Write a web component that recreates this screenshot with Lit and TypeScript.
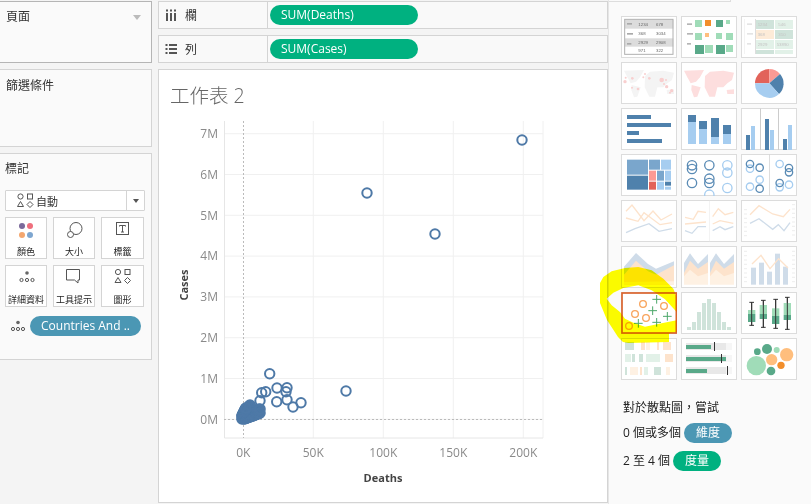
import { LitElement, html, css, svg } from "lit";
import { customElement } from "lit/decorators.js";

type R = [number, number, number, number, string];
const rects = (l: R[]) => l.map(([x, y, w, h, c]) => svg`<rect x=${x} y=${y} width=${w} height=${h} fill=${c}></rect>`);
const rings = (l: number[][], c: string, sw = 4) =>
  l.map(([x, y, r]) => svg`<circle cx=${x} cy=${y} r=${r} fill="none" stroke=${c} stroke-width=${sw}></circle>`);
const dots = (l: number[][], c: string) => l.map(([x, y, r]) => svg`<circle cx=${x} cy=${y} r=${r} fill=${c}></circle>`);
const line = (p: string, c: string, sw = 4) => svg`<polyline points=${p} fill="none" stroke=${c} stroke-width=${sw}></polyline>`;
const area = (p: string, c: string) => svg`<polygon points=${p} fill=${c}></polygon>`;

const BLUE = "#4f81ac", LB = "#a6cdf0", RED = "#e2635a", PINK = "#fc9a94";
const G1 = "#a0dcb8", G2 = "#59a989", OR = "#f28e2b", LO = "#ffbe7d";
const PB = "#cfdce9", PO = "#fde3cc", PO2 = "#fef1e3", PG = "#cfe3da", PG2 = "#e2f1e8";

const world = (dx: number, c: string) =>
  ["222,212 282,210 270,232 258,245 242,250 232,232", "245,255 272,262 262,290 252,292 244,270",
   "285,228 300,215 340,212 372,218 366,240 352,250 340,262 322,262 315,290 298,290 284,262", "350,270 372,268 372,282 352,282"]
    .map((p) => area(p.split(" ").map((q) => { const [a, b] = q.split(","); return `${+a + dx},${b}`; }).join(" "), c));

const tableText = (l: [number, number, string][], c: string) =>
  l.map(([x, y, t]) => svg`<text x=${x} y=${y} class="tiny" fill=${c}>${t}</text>`);

const ticks = (x1: number, x2: number, y0: number, n: number, step: number) =>
  Array.from({ length: n }, (_, i) => svg`<line x1=${x1} x2=${x2} y1=${y0 + i * step} y2=${y0 + i * step} stroke="#e4e4e4" stroke-width="2"></line>`);

const bullet = (y: number, w: number, tick: number) => svg`
  ${rects([[288, y, 120, 21, "#e8e8e8"], [408, y, 18, 21, "#f6f6f6"], [288, y + 6, w, 12, G2], [tick - 1, y - 3, 3, 27, "#333"]])}`;

const box = (x: number, top: number, bot: number, a: number, m: number, b: number) => svg`
  <line x1=${x} x2=${x} y1=${top} y2=${bot} stroke="#333" stroke-width="3"></line>
  <line x1=${x - 7} x2=${x + 7} y1=${top} y2=${top} stroke="#333" stroke-width="3"></line>
  <line x1=${x - 7} x2=${x + 7} y1=${bot} y2=${bot} stroke="#333" stroke-width="3"></line>
  ${rects([[x - 11, a, 22, m - a, G1], [x - 11, m, 22, b - m, G2]])}
  <line x1=${x} x2=${x} y1=${top} y2=${bot} stroke="#333" stroke-width="3"></line>`;

const plus = (x: number, y: number) => svg`<path d="M${x - 13} ${y}h26M${x} ${y - 13}v26" stroke="#4ca86a" stroke-width="3" fill="none"></path>`;

const thumbs: { ox: number; oy: number; c: unknown }[] = [
  { ox: 33, oy: 48, c: svg`
    ${rects([[45, 59, 145, 27, "#dcdcdc"], [45, 115, 145, 25, "#dcdcdc"], [51, 69, 15, 5, "#aaa"], [51, 99, 18, 5, "#aaa"], [51, 129, 13, 5, "#aaa"]])}
    <rect x="44" y="58" width="145" height="105" fill="none" stroke="#b0b0b0" stroke-width="3"></rect>
    ${tableText([[85, 78, "1234"], [138, 78, "678"], [85, 105, "368"], [138, 105, "3034"], [85, 133, "2929"], [138, 133, "2908"], [85, 157, "971"], [138, 157, "322"]], "#666")}` },
  { ox: 213, oy: 48, c: rects([
    [231, 70, 15, 5, "#b5b5b5"], [231, 99, 18, 5, "#b5b5b5"], [231, 129, 12, 5, "#b5b5b5"],
    [255, 60, 21, 21, G1], [285, 60, 18, 18, OR], [318, 60, 21, 21, G2], [348, 60, 12, 12, G1],
    [255, 99, 21, 21, G1], [285, 99, 12, 12, LO], [318, 99, 18, 18, G1], [348, 99, 21, 21, G1],
    [255, 135, 27, 27, G2], [285, 135, 24, 24, G1], [318, 135, 27, 27, G2], [348, 135, 21, 21, G1]]) },
  { ox: 393, oy: 48, c: svg`
    ${rects([[411, 70, 15, 5, "#e4e4e4"], [411, 99, 18, 5, "#e4e4e4"], [411, 129, 12, 5, "#e4e4e4"], [435, 57, 2, 105, "#ccc"], [403, 57, 2, 105, "#eee"],
      [438, 60, 54, 27, PG], [495, 60, 54, 27, PG2], [438, 90, 54, 27, "#fdebd8"], [495, 90, 54, 27, PG], [438, 120, 54, 27, PG2], [495, 120, 54, 27, PG2], [438, 150, 54, 12, PG], [495, 150, 54, 12, PG2]])}
    ${tableText([[443, 78, "1234"], [505, 78, "546"], [443, 108, "368"], [505, 108, "310"], [443, 138, "2929"], [500, 138, "53890"]], "#c4c4c4")}` },

  { ox: 33, oy: 186, c: svg`${world(-180, "#f4f4f4")}${dots([[45, 245, 5], [47, 233, 3], [67, 235, 4], [105, 222, 3], [100, 232, 3], [118, 235, 4], [155, 240, 7], [168, 240, 3], [162, 252, 3], [170, 260, 5], [185, 272, 5], [180, 278, 3], [66, 263, 3], [84, 267, 4]], "#f8cfcf")}` },
  { ox: 213, oy: 186, c: world(0, "#fddede") },
  { ox: 393, oy: 186, c: svg`
    <path d="M478 250L435 250A43 43 0 0 1 478 207Z" fill=${RED}></path>
    <path d="M478 250L478 207A43 43 0 0 1 510 222Z" fill=${PINK}></path>
    <path d="M478 250L510 222A43 43 0 0 1 507 282Z" fill=${BLUE}></path>
    <path d="M478 250L507 282A43 43 0 0 1 435 250Z" fill=${LB}></path>` },

  { ox: 33, oy: 324, c: rects([[51, 345, 72, 12, BLUE], [51, 369, 132, 12, BLUE], [51, 393, 36, 12, BLUE], [51, 417, 105, 12, BLUE]]) },
  { ox: 213, oy: 324, c: rects([[234, 345, 24, 21, BLUE], [234, 366, 24, 66, LB], [267, 363, 24, 24, BLUE], [267, 387, 24, 45, LB], [303, 354, 24, 57, BLUE], [303, 411, 24, 21, LB], [339, 375, 24, 27, BLUE], [339, 402, 24, 30, LB]]) },
  { ox: 393, oy: 324, c: rects([[450, 326, 3, 124, "#ccc"], [504, 326, 3, 124, "#ccc"], [408, 405, 12, 45, BLUE], [423, 378, 12, 72, LB], [465, 357, 12, 93, BLUE], [480, 390, 12, 60, LB], [519, 417, 12, 33, BLUE], [534, 375, 12, 75, LB]]) },

  { ox: 33, oy: 28, c: rects([[51, 45, 63, 45, "#7aa6cc"], [117, 45, 33, 30, "#7aa6cc"], [153, 45, 30, 30, LB], [51, 93, 63, 42, BLUE], [117, 78, 21, 30, PINK], [141, 78, 21, 30, "#7aa6cc"], [165, 78, 18, 30, LB], [117, 111, 21, 24, RED], [141, 111, 21, 24, LB], [165, 111, 18, 12, BLUE], [165, 126, 18, 9, LB]]) },
  { ox: 213, oy: 28, c: svg`${rings([[246, 62, 14], [246, 73, 14], [298, 62, 14], [246, 115, 14], [298, 102, 14], [298, 115, 14]], "#5a8bb5")}${rings([[352, 62, 14], [352, 84, 14], [352, 130, 14], [298, 150, 14]], LB)}` },
  { ox: 393, oy: 28, c: svg`${rects([[478, 30, 2, 122, "#ccc"]])}${rings([[420, 72, 11], [420, 126, 11], [449, 105, 11], [509, 58, 11], [509, 128, 11], [537, 120, 11]], LB)}${rings([[420, 58, 11], [449, 69, 11], [449, 132, 11], [537, 70, 11], [537, 83, 11], [509, 115, 11]], "#5a8bb5")}` },

  { ox: 33, oy: 166, c: svg`${line("48,200 66,181 102,228 129,199 153,226 186,208", PO)}${line("48,220 84,230 102,204 150,240 186,234", PO)}${line("48,264 75,252 117,237 147,260 186,252", PB)}` },
  { ox: 213, oy: 166, c: svg`${rects([[297, 168, 2, 122, "#eee"]])}${line("225,218 250,224 264,200 288,203", PO)}${line("225,238 288,232", PO)}${line("225,258 246,266 264,246 288,246", PB)}${line("308,216 325,192 345,210 370,203", PO)}${line("308,238 330,228 370,236", PO)}${line("308,258 330,246 345,255 370,246", PB)}` },
  { ox: 393, oy: 166, c: svg`${ticks(402, 411, 195, 7, 13)}${ticks(546, 555, 180, 8, 13)}${line("420,210 447,183 488,208 520,216 540,194", PO)}${line("420,236 447,222 488,254 505,240 522,258 540,234", PB)}` },

  { ox: 33, oy: 304, c: svg`${area("42,366 78,325 114,358 138,372 192,350 192,390 42,390", PB)}${area("42,390 78,348 114,380 138,390 192,362 192,420 42,420", PO)}${area("42,420 192,420 192,410 42,412", PO2)}` },
  { ox: 213, oy: 304, c: svg`${area("222,355 240,326 264,358 294,328 294,390 222,390", PB)}${area("222,385 240,348 264,372 294,352 294,400 222,400", PO)}${area("222,395 240,375 264,395 294,385 294,420 222,420", PO2)}${area("300,355 318,326 342,358 372,328 372,390 300,390", PB)}${area("300,385 318,348 342,372 372,352 372,400 300,400", PO)}${area("300,395 318,375 342,395 372,385 372,420 300,420", PO2)}` },
  { ox: 393, oy: 304, c: svg`${ticks(402, 411, 320, 8, 13)}${ticks(546, 555, 320, 8, 13)}${rects([[423, 369, 15, 51, PB], [447, 354, 15, 66, PB], [471, 381, 15, 39, PB], [495, 327, 15, 93, PB], [519, 366, 15, 54, PB]])}${line("426,358 453,332 480,372 506,342 534,370", PO)}` },

  { ox: 93, oy: 96, c: svg`${rings([[159, 132, 10], [135, 162, 10], [168, 174, 10], [222, 138, 10], [117, 198, 10]], "#f8a45c")}${plus(200, 118)}${plus(188, 152)}${plus(145, 190)}${plus(200, 187)}${plus(232, 169)}
    <rect x="96" y="99" width="163" height="120" fill="none" stroke="#d9622b" stroke-width="5"></rect>` },
  { ox: 273, oy: 96, c: rects([[291, 201, 12, 9, PG], [306, 186, 12, 24, PG], [321, 156, 12, 54, PG], [336, 129, 12, 81, PG], [351, 117, 12, 93, PG], [366, 129, 12, 81, PG], [381, 156, 12, 54, PG], [396, 186, 12, 24, PG], [411, 201, 12, 9, PG]]) },
  { ox: 453, oy: 96, c: svg`${box(485, 127, 196, 150, 162, 186)}${box(520, 121, 202, 135, 162, 177)}${box(557, 118, 205, 145, 168, 192)}${box(592, 112, 208, 129, 165, 180)}` },

  { ox: 93, oy: 234, c: rects([[105, 246, 27, 24, PG], [153, 246, 12, 24, PO], [168, 246, 12, 24, PO2], [201, 246, 6, 24, PO], [219, 246, 24, 24, PO], [105, 282, 18, 24, PG2], [126, 282, 9, 24, PG], [147, 282, 12, 24, PG], [168, 282, 42, 24, PG2], [225, 282, 24, 24, PO], [105, 321, 6, 24, PG], [120, 321, 24, 24, PO2], [150, 321, 6, 24, PO], [162, 321, 12, 24, PG2], [192, 321, 21, 24, PG], [228, 321, 12, 24, PO2]]) },
  { ox: 273, oy: 234, c: svg`${bullet(249, 75, 373)}${bullet(285, 120, 394)}${bullet(321, 63, 412)}` },
  { ox: 453, oy: 234, c: svg`${dots([[499, 317, 29], [560, 270, 9]], G1)}${dots([[545, 299, 17], [590, 284, 20]], LO)}${dots([[531, 267, 15], [502, 275, 10], [543, 333, 13]], G2)}${dots([[573, 316, 11]], OR)}` },
];

const points: number[][] = [
  [522, 140], [367, 193], [435, 234], [346, 391], [269.7, 373.7], [277, 388], [287, 387.7], [286, 391.7],
  [260, 400.7], [261.7, 392.7], [265.7, 391.7], [276.7, 401.7], [287, 399.7], [293, 407], [301, 402.7],
];
const cluster: number[][] = [];
for (let i = 0; i < 20; i++) {
  const t = i / 19;
  cluster.push([242 + t * 8, 419 - t * 14], [244 + t * 16, 419 - t * 6], [242 + t * 4, 416 - t * 8], [247 + t * 12, 417 - t * 7], [246 + t * 14, 414 - t * 5]);
}

const ico = {
  dots: html`<svg width="26" height="26" viewBox="0 0 26 26"><circle cx="8" cy="7" r="3" fill="#7b6a9b"></circle><circle cx="16" cy="7" r="3" fill="#ef6f7d"></circle><circle cx="8" cy="16" r="3" fill="#f4a76f"></circle><circle cx="16" cy="16" r="3" fill="#7ea6d0"></circle></svg>`,
  size: html`<svg width="26" height="26" viewBox="0 0 26 26" fill="#fff" stroke="#555"><circle cx="14" cy="9.5" r="6"></circle><circle cx="8.5" cy="15.5" r="3"></circle></svg>`,
  text: html`<svg width="26" height="26" viewBox="0 0 26 26" fill="none" stroke="#555"><rect x="6.5" y="3.5" width="12" height="12"></rect><path d="M9.5 7.5v-1h6v1M12.5 6.5v6.5M11 13h3"></path></svg>`,
  detail: html`<svg width="26" height="26" viewBox="0 0 26 26" fill="none" stroke="#555"><circle cx="13" cy="6" r="1.8" fill="#666" stroke="none"></circle><circle cx="7.5" cy="13" r="1.6"></circle><circle cx="13" cy="13" r="1.6"></circle><circle cx="18.5" cy="13" r="1.6"></circle></svg>`,
  tip: html`<svg width="26" height="26" viewBox="0 0 26 26" fill="none" stroke="#555"><path d="M4.5 2.5h13v10.5h-1.5v3l-3.5-3h-8z"></path></svg>`,
  shape: html`<svg width="26" height="26" viewBox="0 0 26 26" fill="none" stroke="#555"><circle cx="8" cy="5" r="2.6"></circle><rect x="15" y="2.5" width="5" height="5"></rect><path d="M8 10.5l3 5h-6z"></path><path d="M17.5 10.5l3 3-3 3-3-3z"></path></svg>`,
};

@customElement("app-root")
export class AppRoot extends LitElement {
  static styles = css`
    :host { display: block; width: 811px; height: 504px; position: relative; overflow: hidden; background: #f4f4f4;
      font-family: "Open Sans", "Noto Sans CJK TC", sans-serif; color: #333; }
    .app { display: grid; grid-template-columns: 152px 450px 203px; column-gap: 6px; height: 504px; }
    .left { display: flex; flex-direction: column; gap: 6px; padding-top: 1px; }
    .panel { box-sizing: border-box; background: #fafafa; border: 1px solid #d4d4d4; border-left: none; position: relative; padding: 5px 6px; font-size: 12px; }
    .pages { height: 62px; border-color: #b5b5b5; display: flex; justify-content: space-between; align-items: flex-start; padding-top: 5px; }
    .caret { width: 0; height: 0; border: 4px solid transparent; border-top: 5px solid #bbb; border-bottom: none; margin: 8px 4px 0 0; }
    .filters { height: 78px; padding-top: 6px; }
    .marks { height: 207px; padding: 5px 5px; }
    .mk-title { margin-bottom: 13px; }
    .select { box-sizing: border-box; width: 140px; height: 21px; border: 1px solid #d4d4d4; background: #fff; display: flex; align-items: center; margin-bottom: 6px; border-radius: 1px; }
    .select svg { margin-left: 10px; }
    .select span { flex: 1; margin-left: 0; font-size: 11px; }
    .select i { width: 17px; height: 100%; border-left: 1px solid #d4d4d4; display: flex; align-items: center; justify-content: center; }
    .select i::after { content: ""; border: 3.5px solid transparent; border-top: 4px solid #555; border-bottom: none; }
    .mbtns { display: grid; grid-template-columns: 42px 42px 43px; column-gap: 6px; row-gap: 6px; width: 140px; }
    .mbtn { box-sizing: border-box; height: 42px; border: 1px solid #d4d4d4; background: #fff; display: flex; flex-direction: column; align-items: center; font-size: 9px; line-height: 11px; color: #222; padding-top: 1px; white-space: nowrap; }
    .mbtn svg { display: block; margin-bottom: 1px; margin-left: 1px; }
    .field { display: flex; align-items: center; margin-top: 9px; gap: 0; }
    .pill { box-sizing: border-box; color: #fff; border-radius: 10px; height: 20px; line-height: 20px; font-size: 12px; }
    .field .pill { background: #4b97b4; width: 111px; padding-left: 11px; white-space: nowrap; }
    .mid { display: flex; flex-direction: column; gap: 6px; padding-top: 1px; padding-bottom: 1px; box-sizing: border-box; height: 504px; }
    .shelf { box-sizing: border-box; height: 28px; border: 1px solid #d4d4d4; background: #f9f9f9; display: flex; align-items: center; font-size: 12px; }
    .sh-label { box-sizing: border-box; width: 109px; height: 100%; border-right: 1px solid #d4d4d4; display: flex; align-items: center; gap: 8px; padding-left: 6px; }
    .shelf .pill { background: #00b180; width: 148px; margin-left: 2px; padding-left: 11px; }
    .sheet { flex: 1; box-sizing: border-box; border: 1px solid #d4d4d4; background: #fff; display: flex; flex-direction: column; min-height: 0; }
    .title { font-size: 19.5px; line-height: 26px; padding: 13px 0 0 11px; color: #666; height: 29px; font-weight: 300; letter-spacing: 0; }
    .chart { display: block; flex: 1; min-height: 0; }
    .chart text { font-family: "Open Sans", sans-serif; font-size: 12px; fill: #8a8a8a; }
    .chart text.ax { font-size: 11px; font-weight: 700; fill: #444; }
    .right { background: #fafafa; border-left: 1px solid #e6e6e6; margin-left: -6px; padding: 0 0 0 12px; font-size: 12px; color: #222; }
    .strip { box-sizing: border-box; width: 122px; height: 2px; margin: 0 0 14px -12px; border-bottom: 1px solid #ddd; border-right: 1px solid #ddd; }
    .gallery { display: grid; grid-template-columns: repeat(3, 56px); grid-auto-rows: 42px; gap: 4px; }
    .cell { box-shadow: inset 0 0 0 1px #dcdcdc; background: #fff; width: 56px; height: 42px; }
    .cell svg { display: block; width: 56px; height: 42px; }
    .tiny { font-family: "Liberation Sans", sans-serif; font-size: 13px; }
    .hint { margin-top: 20px; padding-left: 2px; display: flex; flex-direction: column; gap: 8px; }
    .hint div { display: flex; align-items: center; gap: 3px; height: 20px; line-height: 20px; }
    .hint .t1 { height: 16px; margin-bottom: -1px; }
    .hint .pill { width: 48px; text-align: center; }
    .hint .dim { background: #4b97b4; }
    .hint .mea { background: #00b180; }
    .scribble { position: absolute; left: 595px; top: 262px; width: 90px; height: 85px; mix-blend-mode: multiply; pointer-events: none; }
  `;

  render() {
    const ys = [0, 1, 2, 3, 4, 5, 6, 7];
    return html`
      <div class="app">
        <div class="left">
          <div class="panel pages"><span>頁面</span><span class="caret"></span></div>
          <div class="panel filters">篩選條件</div>
          <div class="panel marks">
            <div class="mk-title">標記</div>
            <div class="select">
              <svg width="20" height="16" viewBox="0 0 20 16" fill="none" stroke="#555"><circle cx="4.5" cy="3.5" r="2.6"></circle><rect x="11.5" y="1" width="5" height="5"></rect><path d="M4.5 8.5l3 5h-6z"></path><path d="M14 8.5l3 3-3 3-3-3z"></path></svg>
              <span>自動</span><i></i>
            </div>
            <div class="mbtns">
              <div class="mbtn">${ico.dots}顏色</div>
              <div class="mbtn">${ico.size}大小</div>
              <div class="mbtn">${ico.text}標籤</div>
              <div class="mbtn">${ico.detail}詳細資料</div>
              <div class="mbtn">${ico.tip}工具提示</div>
              <div class="mbtn">${ico.shape}圖形</div>
            </div>
            <div class="field">
              <svg width="25" height="16" viewBox="0 0 25 16" fill="none" stroke="#555"><circle cx="13" cy="4.5" r="1.8" fill="#666" stroke="none"></circle><circle cx="8" cy="11" r="1.6"></circle><circle cx="13" cy="11" r="1.6"></circle><circle cx="18" cy="11" r="1.6"></circle></svg>
              <div class="pill">Countries And ..</div>
            </div>
          </div>
        </div>

        <div class="mid">
          <div class="shelf">
            <div class="sh-label">
              <svg width="12" height="12" viewBox="0 0 12 12" fill="#555"><rect x="1" y="4" width="2" height="8"></rect><rect x="5" y="4" width="2" height="8"></rect><rect x="9" y="4" width="2" height="8"></rect><rect x="1" y="0.5" width="2" height="2"></rect><rect x="5" y="0.5" width="2" height="2"></rect><rect x="9" y="0.5" width="2" height="2"></rect></svg>
              <span>欄</span>
            </div>
            <div class="pill">SUM(Deaths)</div>
          </div>
          <div class="shelf">
            <div class="sh-label">
              <svg width="12" height="12" viewBox="0 0 12 12" fill="#555"><rect x="0.5" y="1" width="2" height="2"></rect><rect x="4" y="1" width="8" height="2"></rect><rect x="0.5" y="5" width="2" height="2"></rect><rect x="4" y="5" width="8" height="2"></rect><rect x="0.5" y="9" width="2" height="2"></rect><rect x="4" y="9" width="8" height="2"></rect></svg>
              <span>列</span>
            </div>
            <div class="pill">SUM(Cases)</div>
          </div>
          <div class="sheet">
            <div class="title">工作表 2</div>
            <svg class="chart" viewBox="159 112 448 390" width="448" height="390">
              ${ys.map((i) => svg`<line x1="224" x2="543" y1=${419.3 - i * 40.8} y2=${419.3 - i * 40.8} stroke="#f0f0f0"></line>`)}
              ${[313.3, 383.3, 453.3, 523.3, 543].map((x) => svg`<line x1=${x} x2=${x} y1="121" y2="438" stroke="#f0f0f0"></line>`)}
              <path d="M224.5 121V438H543" fill="none" stroke="#e6e6e6"></path>
              <line x1="243.5" x2="243.5" y1="121" y2="438" stroke="#bbb" stroke-dasharray="2 2"></line>
              <line x1="224" x2="543" y1="419.5" y2="419.5" stroke="#bbb" stroke-dasharray="2 2"></line>
              ${ys.map((i) => svg`<text x="218" y=${423.5 - i * 40.8} text-anchor="end">${i}M</text>`)}
              ${[0, 50, 100, 150, 200].map((v) => svg`<text x=${243.3 + v * 1.4} y="457" text-anchor="middle">${v}K</text>`)}
              <text class="ax" x="383" y="482" text-anchor="middle">Deaths</text>
              <text class="ax" x="0" y="0" text-anchor="middle" transform="translate(188 285) rotate(-90)">Cases</text>
              ${cluster.map(([x, y]) => svg`<circle cx=${x} cy=${y} r="4.7" fill="none" stroke="#4e79a7" stroke-width="2.2"></circle>`)}
              ${points.map(([x, y]) => svg`<circle cx=${x} cy=${y} r="4.7" fill="none" stroke="#4e79a7" stroke-width="2"></circle>`)}
            </svg>
          </div>
        </div>

        <div class="right">
          <div class="strip"></div>
          <div class="gallery">
            ${thumbs.map((t) => html`<div class="cell"><svg viewBox="${t.ox} ${t.oy} 168 126">${t.c}</svg></div>`)}
          </div>
          <div class="hint">
            <div class="t1">對於散點圖，嘗試</div>
            <div>0 個或多個 <span class="pill dim">維度</span></div>
            <div>2 至 4 個 <span class="pill mea">度量</span></div>
          </div>
        </div>
      </div>
      <svg class="scribble" viewBox="0 0 270 255">
        <path fill="#ffff00" fill-rule="evenodd" d="M15 63L25 45L50 28L90 18L130 15L170 25L205 50L235 80L245 105L245 150L210 112L170 85L130 70L85 78L55 92L35 110L50 130L75 150L90 170L115 182L150 194L200 184L245 175L245 210L222 214L222 240L100 243L84 240L69 225L36 174L15 123Z"></path>
      </svg>
    `;
  }
}
